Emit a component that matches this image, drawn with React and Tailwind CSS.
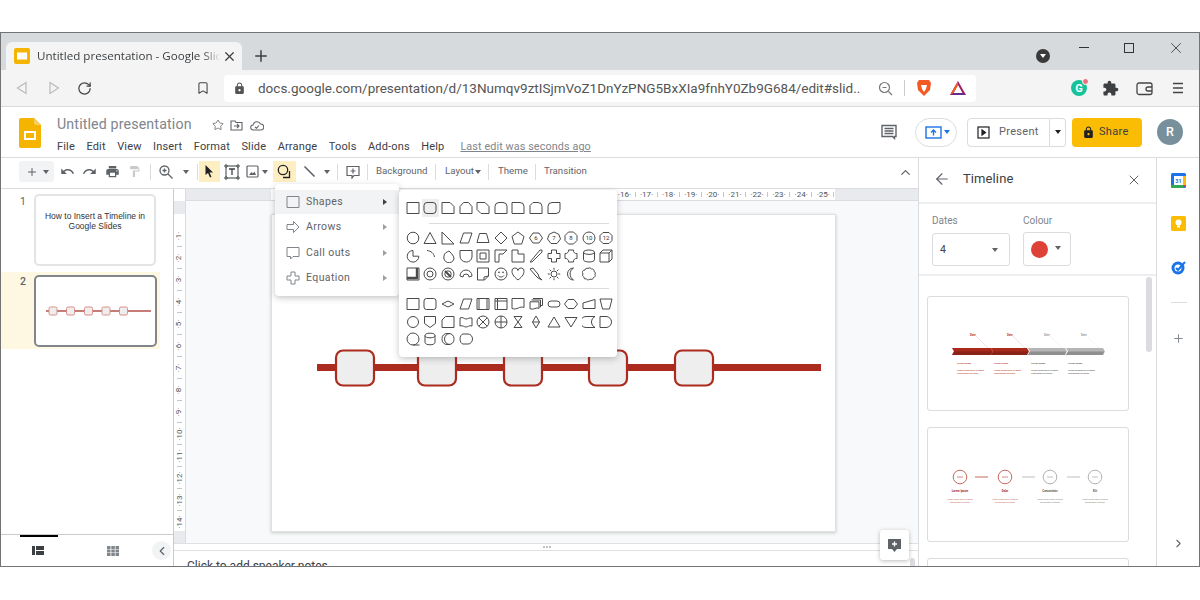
// App.jsx
import React from 'react';
import { ArrowLeft, Bookmark, ChevronLeft, ChevronRight, ChevronUp, Plus, RotateCw, Star, X } from 'lucide-react';

const Mat = ({ d, size = 16, color = '#5f6368', className = '' }) => (
    <svg width={size} height={size} viewBox="0 0 24 24" fill={color} className={className}>
        <path d={d} />
    </svg>
);

const UNDO = 'M12.5 8c-2.65 0-5.05.99-6.9 2.6L2 7v9h9l-3.62-3.62c1.39-1.16 3.16-1.88 5.12-1.88 3.54 0 6.55 2.31 7.6 5.5l2.37-.78C21.08 11.03 17.15 8 12.5 8z';
const REDO = 'M18.4 10.6C16.55 8.99 14.15 8 11.5 8c-4.65 0-8.58 3.03-9.96 7.22L3.9 16c1.05-3.19 4.05-5.5 7.6-5.5 1.95 0 3.73.72 5.12 1.88L13 16h9V7l-3.6 3.6z';
const PRINT = 'M19 8H5c-1.66 0-3 1.34-3 3v6h4v4h12v-4h4v-6c0-1.66-1.34-3-3-3zm-3 11H8v-5h8v5zm3-7c-.55 0-1-.45-1-1s.45-1 1-1 1 .45 1 1-.45 1-1 1zm-1-9H6v4h12V3z';
const PAINT = 'M18 4V3c0-.55-.45-1-1-1H5c-.55 0-1 .45-1 1v4c0 .55.45 1 1 1h12c.55 0 1-.45 1-1V6h1v4H9v11c0 .55.45 1 1 1h2c.55 0 1-.45 1-1v-9h8V4h-3z';
const PUZZLE = 'M20.5 11H19V7c0-1.1-.9-2-2-2h-4V3.5C13 2.12 11.88 1 10.5 1S8 2.12 8 3.5V5H4c-1.1 0-1.99.9-1.99 2v3.8H3.5c1.49 0 2.7 1.21 2.7 2.7s-1.21 2.7-2.7 2.7H2V20c0 1.1.9 2 2 2h3.8v-1.5c0-1.49 1.21-2.7 2.7-2.7 1.49 0 2.7 1.21 2.7 2.7V22H17c1.1 0 2-.9 2-2v-4h1.5c1.38 0 2.5-1.12 2.5-2.5S21.88 11 20.5 11z';
const LOCK = 'M18 8h-1V6c0-2.76-2.24-5-5-5S7 3.24 7 6v2H6c-1.1 0-2 .9-2 2v10c0 1.1.9 2 2 2h12c1.1 0 2-.9 2-2V10c0-1.1-.9-2-2-2zm-6 9c-1.1 0-2-.9-2-2s.9-2 2-2 2 .9 2 2-.9 2-2 2zm3.1-9H8.9V6c0-1.71 1.39-3.1 3.1-3.1 1.71 0 3.1 1.39 3.1 3.1v2z';

const Caret = ({ className = '', color = 'border-t-[#5f6368]' }) => (
    <span className={`inline-block w-0 h-0 border-x-[3.5px] border-x-transparent border-t-[4px] ${color} ${className}`} />
);

const Sep = ({ className = '' }) => <span className={`w-px h-[16px] bg-[#dadce0] shrink-0 ${className}`} />;

// single shape in the insert menu
const Sh = ({ children, hover }) => (
    <span className={`w-[17.6px] h-[17.6px] flex items-center justify-center ${hover ? 'bg-[#eeeeee]' : ''}`}>
        <svg width="14" height="14" viewBox="0 0 14 14" fill="none" stroke="#4a4a4a" strokeWidth="1" strokeLinejoin="round">
            {children}
        </svg>
    </span>
);

const Num = ({ n }) => (
    <text x="7" y="9.2" fontSize="6" fontFamily="Roboto, sans-serif" fill="#333" stroke="none" textAnchor="middle">{n}</text>
);

const RowOne = [
    <path d="M1 1.5h12v11H1z" />,
    <rect x="1" y="1.5" width="12" height="11" rx="3" />,
    <path d="M1 1.5h8l4 4v7H1z" />,
    <path d="M4.5 1.5h5l3.5 4v7H1v-7z" />,
    <path d="M1 1.5h8l4 4v7H5l-4-4z" />,
    <path d="M5 1.5h4a4 4 0 0 1 4 4v7H1v-7a4 4 0 0 1 4-4z" />,
    <path d="M1 1.5h8a4 4 0 0 1 4 4v7H1z" />,
    <path d="M4 1.5h5a4 4 0 0 1 4 4v7H1v-8z" />,
    <path d="M5 1.5h8v7a4 4 0 0 1-4 4H1v-7a4 4 0 0 1 4-4z" />,
];

const RowTwo = [
    <circle cx="7" cy="7" r="5.8" />,
    <path d="M7 1.5l6 11H1z" />,
    <path d="M1 1l12 12H1z" />,
    <path d="M4.5 2H13l-3.5 10H1z" />,
    <path d="M3.5 2.5h7l2.5 9H1z" />,
    <path d="M7 1l6 6-6 6-6-6z" />,
    <path d="M7 1l6 4.5-2.3 7.5H3.3L1 5.5z" />,
    <><path d="M4 2h6l3.5 5-3.5 5H4L.5 7z" /><Num n="6" /></>,
    <><path d="M7 1l4.8 2.3L13.5 8 10 12.5H4L.5 8l1.7-4.7z" /><Num n="7" /></>,
    <><path d="M4.5 1h5l3.5 3.5v5L9.5 13h-5L1 9.5v-5z" /><Num n="8" /></>,
    <><circle cx="7" cy="7" r="6" /><Num n="10" /></>,
    <><path d="M4 1.5h6l3 3v5l-3 3H4l-3-3v-5z" /><Num n="12" /></>,
];

const RowThree = [
    <path d="M7 1.5A5.8 5.8 0 1 0 12.8 7.2H7z" />,
    <path d="M4 1.5c4 .4 7 3 7.5 6.5" />,
    <path d="M3 7a5 5 0 1 0 10 3c0-3-2-5-5-8-2 1-5 2-5 5z" />,
    <path d="M1 1.5h12V8a5.5 5.5 0 0 1-5.5 5H7a6 6 0 0 1-6-6z" />,
    <><path d="M1 1h12v12H1z" /><path d="M4 4h6v6H4z" /></>,
    <path d="M1 1h12L9 5H5v8l-4 0z" />,
    <path d="M1 1h6v4h6v8H1z" />,
    <path d="M1 13L11 1h2v2L3 13z" />,
    <path d="M4.5 1h5v3.5H13v5H9.5V13h-5V9.5H1v-5h3.5z" />,
    <path d="M4.5 1a2 2 0 0 0 0 0h5a3 3 0 0 0 3.5 3.5v5A3 3 0 0 0 9.5 13h-5A3 3 0 0 0 1 9.5v-5A3 3 0 0 0 4.5 1z" />,
    <><ellipse cx="7" cy="3.2" rx="5.5" ry="2.2" /><path d="M1.5 3.2v7.6c0 1.2 2.5 2.2 5.5 2.2s5.5-1 5.5-2.2V3.2" /></>,
    <><path d="M1 4l3-3h9v9l-3 3H1z" /><path d="M1 4h9v9M10 4l3-3" /></>,
];

const RowFour = [
    <><path d="M1 1h12v12H1z" /><path d="M1 11h10V1" strokeWidth="2.4" /></>,
    <><circle cx="7" cy="7" r="6" /><circle cx="7" cy="7" r="3" /></>,
    <><circle cx="7" cy="7" r="6" /><circle cx="7" cy="7" r="3.2" /><path d="M4 4l6 6" strokeWidth="2" /></>,
    <path d="M1 9a6 6 0 0 1 12 0l-3 1a3 3 0 0 0-6 0z" />,
    <path d="M1.5 1h11v8l-4 4h-7zM12.5 9l-4.5 1v3" />,
    <><circle cx="7" cy="7" r="6" /><path d="M4 8.5c1.5 2 4.5 2 6 0" /><circle cx="5" cy="5.3" r=".5" /><circle cx="9" cy="5.3" r=".5" /></>,
    <path d="M7 13C2 9 1 6.5 1 4.5A3 3 0 0 1 7 3.5 3 3 0 0 1 13 4.5C13 6.5 12 9 7 13z" />,
    <path d="M1 2l3-1 4 5 1 1 1 3 3 3-4-2-3-3z" />,
    <><circle cx="7" cy="7" r="3" /><path d="M7 .8v2M7 11.2v2M.8 7h2M11.2 7h2M2.6 2.6L4 4M10 10l1.4 1.4M2.6 11.4L4 10M10 4l1.4-1.4" /></>,
    <path d="M9.5 1a6 6 0 0 0 0 12A7 7 0 0 1 9.5 1z" />,
    <path d="M3 3a2 2 0 0 1 3-1.5A2.3 2.3 0 0 1 9.5 2 2 2 0 0 1 12 4.5a2 2 0 0 1 1 3 2 2 0 0 1-1.5 3A2.2 2.2 0 0 1 8 12a2.2 2.2 0 0 1-3.5 0A2.2 2.2 0 0 1 1.8 10 2 2 0 0 1 1 7a2.4 2.4 0 0 1 2-4z" />,
];

const RowFive = [
    <path d="M1 1.5h12v11H1z" />,
    <rect x="1" y="1.5" width="12" height="11" rx="2.5" />,
    <path d="M7 4l6 3-6 3-6-3z" />,
    <path d="M4.5 2H13l-3.5 10H1z" />,
    <path d="M1 1.5h12v11H1zM3 1.5v11M11 1.5v11" />,
    <path d="M1 1.5h12v11H1zM3.5 1.5v11M1 4h12" />,
    <path d="M1 1.5h12v9c-4-2-7 3-12 1z" />,
    <path d="M4 1.5h9.500v7h-2M2.500 3h9v7h-1M1 4.800h9v6.500c-3-1.500-5 2-9 .5z" />,
    <rect x="1" y="4" width="12" height="6" rx="3" />,
    <path d="M4 2.500h6l3.500 4.500-3.500 4.500H4L.5 7z" />,
    <path d="M1 6l12-3.500v9H1z" />,
    <path d="M1 2h12l-2.500 10h-7z" />,
];

const RowSix = [
    <circle cx="7" cy="7" r="5.500" />,
    <path d="M1.500 1.500h11v7L7 12.500 1.500 8.500z" />,
    <path d="M4.500 1.500H13v11H1V5z" />,
    <path d="M1 3c3-1.500 4 1 6 1s3-1.500 6-1v8c-3-1-4 1-6 1s-3-2-6-1z" />,
    <><circle cx="7" cy="7" r="6" /><path d="M2.800 2.800l8.400 8.400M11.200 2.800l-8.400 8.400" /></>,
    <><circle cx="7" cy="7" r="6" /><path d="M1 7h12M7 1v12" /></>,
    <path d="M3 1.500h8L3 12.500h8z" />,
    <><path d="M7 1l3.500 6L7 13 3.500 7z" /><path d="M3.500 7h7" /></>,
    <path d="M7 2l6 10H1z" />,
    <path d="M1 2.500h12L7 12z" />,
    <path d="M4 1.500h9a6 6 0 0 0 0 11H4a5.500 5.500 0 0 1 0-11z" />,
    <path d="M1 1.500h6a5.500 5.500 0 0 1 0 11H1z" />,
];

const RowSeven = [
    <><circle cx="7" cy="7" r="6" /><path d="M7 13h6.500" /></>,
    <><ellipse cx="7" cy="3.500" rx="5" ry="2.300" /><path d="M2 3.500v7c0 1.300 2.200 2.300 5 2.300s5-1 5-2.300v-7" /></>,
    <><rect x="1" y="1.500" width="12" height="11" rx="5" /><path d="M9 1.500a5.500 5.500 0 0 0 0 11" /></>,
    <path d="M4 2h5a4.500 5 0 0 1 0 10H4c-1.500 0-3-2.500-3-5s1.500-5 3-5z" />,
];

const ShapeRow = ({ items, hoverAt = -1 }) => (
    <div className="flex h-[17.6px]">
        {items.map((s, i) => <Sh key={i} hover={i === hoverAt}>{s}</Sh>)}
    </div>
);

const TimelineArrowCard = () => (
    <svg width="200" height="113" viewBox="0 0 200 113">
        {[
            [42, '#c0392b'], [79, '#c0392b'], [116, '#9e9e9e'], [153, '#9e9e9e'],
        ].map(([x, c], i) => (
            <g key={i}>
                <text x={x} y="39" fontSize="2.800" fontWeight="700" fontFamily="Roboto, sans-serif" fill={c}>Date</text>
                <path d={`M${x + 6} 39L${x + 18} 51`} stroke={i < 2 ? '#eecdc9' : '#eeeeee'} strokeWidth=".6" />
                <text x={x - 13} y="67" fontSize="2.400" fontWeight="700" fontFamily="Roboto, sans-serif" fill={c === '#9e9e9e' ? '#555' : c}>Lorem Ipsum</text>
                <text x={x - 13} y="74" fontSize="2.200" fontWeight="500" fontFamily="Roboto, sans-serif" fill={c === '#9e9e9e' ? '#555' : c}>Lorem ipsum dolor sit amet</text>
                <text x={x - 13} y="77" fontSize="2.200" fontWeight="500" fontFamily="Roboto, sans-serif" fill={c === '#9e9e9e' ? '#555' : c}>consectetur elit tortor</text>
            </g>
        ))}
        <path d="M24 51h39l2 3.500-2 3.500H24l2-3.500z" fill="#a9291d" />
        <path d="M26 54.500h38l-1 3.500H24z" fill="#7f1f16" opacity=".7" />
        <path d="M63 51h36l2 3.500-2 3.500H63l2-3.500z" fill="#a9291d" />
        <path d="M65 54.500h35l-1 3.500H63z" fill="#7f1f16" opacity=".7" />
        <path d="M100 51h37l2 3.500-2 3.500h-37l2-3.500z" fill="#b5b5b5" />
        <path d="M102 54.500h36l-1 3.500h-37z" fill="#8f8f8f" />
        <path d="M138 51h37l2 3.500-2 3.500h-37l2-3.500z" fill="#b5b5b5" />
        <path d="M140 54.500h36l-1 3.500h-37z" fill="#8f8f8f" />
    </svg>
);

const TimelineCircleCard = () => (
    <svg width="200" height="113" viewBox="0 0 200 113">
        {[
            [32, '#c0564b', 'Lorem Ipsum'], [77, '#c0564b', 'Dolor'], [122, '#a8a8a8', 'Consectetur'], [167, '#a8a8a8', 'Elit'],
        ].map(([x, c, t], i) => (
            <g key={i}>
                <circle cx={x} cy="49" r="6.800" fill="none" stroke={c} strokeWidth=".9" />
                <path d={`M${x - 3} 49h6`} stroke={c} strokeWidth=".7" />
                <text x={x} y="64" fontSize="2.800" fontWeight="700" fontFamily="Roboto, sans-serif" textAnchor="middle" fill={i < 2 ? '#a9291d' : '#555'}>{t}</text>
                <text x={x} y="72" fontSize="2.100" fontFamily="Roboto, sans-serif" textAnchor="middle" fill={i < 2 ? '#c0564b' : '#777'}>Lorem ipsum dolor sit amet</text>
                <text x={x} y="75" fontSize="2.100" fontFamily="Roboto, sans-serif" textAnchor="middle" fill={i < 2 ? '#c0564b' : '#777'}>consectetur elit tortor</text>
            </g>
        ))}
        <path d="M47 49h13" stroke="#c0564b" strokeWidth=".9" />
        <path d="M94 49h13M139 49h13" stroke="#b5b5b5" strokeWidth=".9" />
    </svg>
);

const MiniTimeline = () => (
    <svg width="118" height="68" viewBox="0 0 118 68">
        <path d="M10 34h105" stroke="#b5524a" strokeWidth="1.300" />
        {[13, 30.500, 48.500, 66, 83.500].map((x) => (
            <rect key={x} x={x} y="30" width="8" height="8" rx="1.500" fill="#eeeeee" stroke="#d98f88" strokeWidth="1" />
        ))}
    </svg>
);

const App = () => {
    const hNums = [];
    for (let i = 1; i <= 25; i++) hNums.push(i);
    const vNums = [];
    for (let i = 1; i <= 14; i++) vNums.push(i);

    return (
        <div className="w-[1200px] h-[600px] bg-white relative overflow-hidden pt-[32px] font-['Roboto',sans-serif] text-[#3c4043]">
            <div className="h-[535px] border border-[#737373] flex flex-col overflow-hidden bg-white">

                {/* tab strip */}
                <div className="h-[37px] shrink-0 bg-[#d7dadd] flex items-end pl-[5px] relative">
                    <div className="w-[236px] h-[28px] bg-[#f4f4f5] rounded-t-[6px] flex items-center pl-[8px]">
                        <svg width="16" height="16" viewBox="0 0 16 16">
                            <rect width="16" height="16" rx="2" fill="#f4b400" />
                            <rect x="3" y="4.500" width="10" height="7" fill="#fff" />
                        </svg>
                        <span className="ml-[7px] w-[184px] text-[11.6px] whitespace-nowrap overflow-hidden font-['Open_Sans',sans-serif] text-[#3c4043] [mask-image:linear-gradient(to_right,black_90%,transparent)]">Untitled presentation - Google Slides</span>
                        <X size={15} strokeWidth={2} color="#3c4043" className="ml-[1px]" />
                    </div>
                    <Plus size={18} strokeWidth={2} color="#3c4043" className="ml-[10px] mb-[5px]" />
                    <div className="ml-auto flex items-center h-full relative">
                        <span className="w-[14px] h-[14px] rounded-full bg-[#3a3a3a] flex items-center justify-center mr-[29px] mt-[9px]">
                            <Caret color="border-t-[#ffffff]" />
                        </span>
                        <span className="w-[10px] h-px bg-[#333] mr-[35px] mb-[8px]" />
                        <span className="w-[10px] h-[10px] border border-[#333] mr-[33px] mb-[8px]" />
                        <X size={18} strokeWidth={1.100} color="#333" className="mr-[14px] mb-[8px]" />
                    </div>
                </div>

                {/* address bar */}
                <div className="h-[37px] shrink-0 bg-[#f4f4f5] border-b border-[#d8dadc] flex items-center">
                    <svg width="14" height="14" viewBox="0 0 14 14" className="ml-[14px]" fill="none" stroke="#b8babc" strokeWidth="1.200"><path d="M11 1.500L2.500 7l8.500 5.500z" /></svg>
                    <svg width="14" height="14" viewBox="0 0 14 14" className="ml-[18px]" fill="none" stroke="#b8babc" strokeWidth="1.200"><path d="M3 1.500L11.500 7 3 12.500z" /></svg>
                    <RotateCw size={15} strokeWidth={2} color="#444" className="ml-[16px]" />
                    <Bookmark size={14} strokeWidth={1.800} color="#444" className="ml-[104px]" />
                    <div className="ml-[14px] w-[752px] h-[27px] rounded-[4px] bg-white flex items-center pl-[9px]">
                        <Mat d={LOCK} size={13} color="#555" />
                        <span className="ml-[12px] mt-[1px] w-[603px] text-[13.5px] text-[#555] whitespace-nowrap overflow-hidden">docs.google.com/presentation/d/13Numqv9ztISjmVoZ1DnYzPNG5BxXIa9fnhY0Zb9G684/edit#slid...</span>
                        <svg width="15" height="15" viewBox="0 0 15 15" fill="none" stroke="#777" strokeWidth="1.200" className="ml-[17px]">
                            <circle cx="6.500" cy="6.500" r="5" /><path d="M10.500 10.500L14 14M4.500 6.500h4" />
                        </svg>
                        <span className="w-px h-[16px] bg-[#ccc] ml-[11px]" />
                        <svg width="16" height="18" viewBox="0 0 16 18" className="ml-[11px]">
                            <path d="M3 1h10l2 3-1 7-6 6-6-6-1-7z" fill="#f15a24" />
                            <path d="M5 6h6l-1 4-2 3-2-3z" fill="#fff" />
                        </svg>
                        <svg width="18" height="16" viewBox="0 0 18 16" className="ml-[17px]">
                            <path d="M9 1l8 14H1z" fill="#9e1f63" />
                            <path d="M9 5l4.500 8h-9z" fill="#fff" />
                            <path d="M1 15l3.500-2H13.500L17 15z" fill="#662d91" />
                            <path d="M1 15L9 1v4L4.500 13z" fill="#f15a24" />
                        </svg>
                    </div>
                    <span className="ml-[95px] relative w-[16px] h-[16px] rounded-full bg-[#15c39a] flex items-center justify-center text-[11px] font-bold text-white leading-none">G
                        <span className="absolute -top-[2px] -right-[2px] w-[7px] h-[7px] rounded-full bg-[#f0727e] border border-white" />
                    </span>
                    <Mat d={PUZZLE} size={17} color="#3c4043" className="ml-[15px]" />
                    <svg width="17" height="15" viewBox="0 0 17 15" fill="none" stroke="#444" strokeWidth="1.300" className="ml-[17px]">
                        <rect x="1" y="2" width="15" height="11.500" rx="2" /><path d="M16 6h-4a2 2 0 0 0 0 4h4" />
                    </svg>
                    <svg width="12" height="12" viewBox="0 0 12 12" stroke="#444" strokeWidth="1.300" className="ml-[19px]"><path d="M1 1.500h10M1 6h10M1 10.500h10" /></svg>
                </div>

                {/* docs header */}
                <div className="h-[51px] shrink-0 border-b border-[#dadce0] flex relative">
                    <svg width="22" height="30" viewBox="0 0 22 30" className="ml-[18px] mt-[11px]">
                        <path d="M2 0h13l7 7v21a2 2 0 0 1-2 2H2a2 2 0 0 1-2-2V2a2 2 0 0 1 2-2z" fill="#f4b400" />
                        <path d="M15 0l7 7h-5a2 2 0 0 1-2-2z" fill="#f7cd5b" />
                        <path d="M5 13h12v9H5z" fill="#fff" /><path d="M7 15h8v5H7z" fill="#f4b400" />
                    </svg>
                    <div className="ml-[16px] flex flex-col">
                        <div className="flex items-center h-[28px] mt-[4px]">
                            <span className="text-[14.2px] text-[#80868b] tracking-[0.15px] w-[155px] whitespace-nowrap">Untitled presentation</span>
                            <Star size={12} strokeWidth={1.600} color="#5f6368" />
                            <svg width="13" height="12" viewBox="0 0 13 12" fill="none" stroke="#5f6368" strokeWidth="1.100" className="ml-[6px]">
                                <path d="M1 2h4l1 1.500h6V11H1zM4 7h5M7 5l2 2-2 2" />
                            </svg>
                            <svg width="14" height="11" viewBox="0 0 14 11" fill="none" stroke="#5f6368" strokeWidth="1.100" className="ml-[7px]">
                                <path d="M3.500 10a2.500 2.500 0 0 1-.5-5A4 4 0 0 1 10.500 4 3 3 0 0 1 11 10zM5 7l1.500 1.200L9 5.500" />
                            </svg>
                        </div>
                        <div className="flex items-center text-[11px] tracking-[0.16px] text-[#3c4043] h-[14px] mt-[1px]">
                            <span>File</span><span className="ml-[11.5px]">Edit</span><span className="ml-[11.5px]">View</span>
                            <span className="ml-[11.5px]">Insert</span><span className="ml-[11.5px]">Format</span><span className="ml-[11.5px]">Slide</span>
                            <span className="ml-[11.5px]">Arrange</span><span className="ml-[11.5px]">Tools</span><span className="ml-[11.5px]">Add-ons</span>
                            <span className="ml-[11.5px]">Help</span>
                            <span className="ml-[16px] text-[#80868b] underline text-[10.8px] tracking-[0.1px]">Last edit was seconds ago</span>
                        </div>
                    </div>
                    <div className="ml-auto flex items-center">
                        <svg width="16" height="16" viewBox="0 0 16 16" fill="none" stroke="#5f6368" strokeWidth="1.400"><path d="M1 1.500h14v11h-1.500v2l-2-2H1zM3.500 4.500h9M3.500 7h9M3.500 9.500h9" /></svg>
                        <div className="ml-[18px] w-[42px] h-[29px] rounded-full border border-[#dadce0] flex items-center pl-[9px]">
                            <svg width="17" height="13" viewBox="0 0 17 13" fill="none" stroke="#1a73e8" strokeWidth="1.400">
                                <rect x="1" y="1" width="15" height="11" /><path d="M8.500 9.500V4.500M6 6.500l2.500-2.500L11 6.500" />
                            </svg>
                            <Caret color="border-t-[#1a73e8]" className="ml-[2px]" />
                        </div>
                        <div className="ml-[10px] w-[83px] h-[29px] border border-[#dadce0] rounded-l-[4px] flex items-center pl-[9px]">
                            <svg width="13" height="13" viewBox="0 0 13 13" fill="none" stroke="#202124" strokeWidth="1.200"><rect x="1" y="1" width="11" height="11" /><path d="M5 4v5l3.500-2.500z" fill="#202124" /></svg>
                            <span className="ml-[9px] text-[11px] tracking-[0.3px] text-[#5f6368]">Present</span>
                        </div>
                        <div className="w-[16px] h-[29px] border border-l-0 border-[#dadce0] rounded-r-[4px] flex items-center justify-center"><Caret color="border-t-[#202124]" /></div>
                        <div className="ml-[6px] w-[70px] h-[29px] rounded-[4px] bg-[#fbbc04] flex items-center pl-[10px]">
                            <Mat d={LOCK} size={13} color="#202124" />
                            <span className="ml-[4px] text-[11px] tracking-[0.3px] text-[#3c4043]">Share</span>
                        </div>
                        <span className="ml-[15px] mr-[16px] w-[26px] h-[26px] rounded-full bg-[#78909c] text-white text-[12.500px] font-medium flex items-center justify-center">R</span>
                    </div>
                </div>

                {/* body */}
                <div className="flex-1 flex min-h-0">
                    <div className="w-[917px] shrink-0 flex flex-col min-w-0">

                        {/* toolbar */}
                        <div className="h-[31px] shrink-0 border-b border-[#dadce0] flex items-center pl-[18px] pb-[3px] relative">
                            <div className="w-[35px] h-[21px] bg-[#f1f3f4] rounded-[3px] flex items-center pl-[7px]">
                                <Plus size={12} strokeWidth={2} color="#5f6368" /><Caret className="ml-[5px]" />
                            </div>
                            <Mat d={UNDO} size={15} className="ml-[6px]" />
                            <Mat d={REDO} size={15} className="ml-[7px]" />
                            <Mat d={PRINT} size={15} className="ml-[8px]" />
                            <Mat d={PAINT} size={13} color="#c7c9cc" className="ml-[8px]" />
                            <Sep className="ml-[9px]" />
                            <svg width="14" height="14" viewBox="0 0 14 14" fill="none" stroke="#5f6368" strokeWidth="1.300" className="ml-[8px]">
                                <circle cx="5.500" cy="5.500" r="4.500" /><path d="M9 9l4.500 4.500M3.500 5.500h4M5.500 3.500v4" />
                            </svg>
                            <Caret className="ml-[10px]" />
                            <Sep className="ml-[8px]" />
                            <div className="ml-[1px] w-[21px] h-[21px] bg-[#feefc3] flex items-center justify-center">
                                <svg width="9" height="13" viewBox="0 0 9 13" fill="#202124"><path d="M.5 0v10l2.500-2 2 4.500 1.500-.7-2-4.300h3.500z" /></svg>
                            </div>
                            <svg width="16" height="16" viewBox="0 0 16 16" fill="none" stroke="#3c4043" strokeWidth="1" className="ml-[4px]">
                                <rect x="2" y="2" width="12" height="12" /><path d="M5 5h6M8 5v6" strokeWidth="1.300" />
                                <path d="M1 1h2v2H1zM13 1h2v2h-2zM1 13h2v2H1zM13 13h2v2h-2z" fill="#fff" />
                            </svg>
                            <svg width="13" height="13" viewBox="0 0 13 13" fill="none" stroke="#5f6368" strokeWidth="1.200" className="ml-[6px]">
                                <rect x="1" y="1" width="11" height="11" rx="1" /><path d="M3 10l2.500-3 1.500 1.500L8.500 6.500 10 10z" fill="#5f6368" stroke="none" />
                            </svg>
                            <Caret className="ml-[3px]" />
                            <div className="ml-[5px] w-[23px] h-[21px] bg-[#feefc3] flex items-center justify-center">
                                <svg width="15" height="15" viewBox="0 0 15 15" fill="none" stroke="#202124" strokeWidth="1.300">
                                    <circle cx="6" cy="6" r="4.700" /><path d="M12.500 7v6.500H6" />
                                </svg>
                            </div>
                            <svg width="13" height="13" viewBox="0 0 13 13" stroke="#5f6368" strokeWidth="1.600" className="ml-[7px]"><path d="M1.500 1.500l10 10" /></svg>
                            <Caret className="ml-[8px]" />
                            <Sep className="ml-[7px]" />
                            <svg width="14" height="14" viewBox="0 0 14 14" fill="none" stroke="#5f6368" strokeWidth="1.200" className="ml-[8px]">
                                <path d="M1 1.500h12v9H8L6 13v-2.500H1zM7 3.500v5M4.500 6h5" />
                            </svg>
                            <Sep className="ml-[7px]" />
                            <span className="ml-[8px] text-[9.7px] text-[#5f6368] w-[51px] whitespace-nowrap">Background</span>
                            <Sep className="ml-[8px]" />
                            <span className="ml-[9px] text-[9.7px] text-[#5f6368] w-[29px]">Layout</span>
                            <Caret className="ml-[1px]" />
                            <Sep className="ml-[7px]" />
                            <span className="ml-[9px] text-[9.7px] text-[#5f6368] w-[30px]">Theme</span>
                            <Sep className="ml-[7px]" />
                            <span className="ml-[8px] text-[9.7px] text-[#5f6368]">Transition</span>
                            <ChevronUp size={15} strokeWidth={2} color="#5f6368" className="absolute left-[897px] top-[7px]" />
                        </div>

                        <div className="flex-1 flex min-h-0">
                            {/* filmstrip */}
                            <div className="w-[173px] shrink-0 border-r border-[#c8cacc] flex flex-col">
                                <div className="flex-1 pr-[13px]">
                                    <div className="flex pt-[5px] h-[83px]">
                                        <span className="w-[20px] pl-[19px] text-[10.500px] text-[#5f6368] leading-[12px] mt-[2px]">1</span>
                                        <div className="ml-[13px] w-[122px] h-[72px] border-2 border-[#e3e4e6] rounded-[5px] flex flex-col items-center pt-[15px] text-[8.500px] leading-[10px] text-[#333] font-['Liberation_Sans',sans-serif]">
                                            <span>How to Insert a Timeline in</span>
                                            <span>Google Slides</span>
                                        </div>
                                    </div>
                                    <div className="flex h-[77px] items-center bg-[#fef8e3]">
                                        <span className="w-[20px] pl-[19px] self-start text-[10.500px] font-medium text-[#5f6368] leading-[12px] mt-[4px]">2</span>
                                        <div className="ml-[13px] w-[123px] h-[72px] border-2 border-[#80868b] rounded-[5px] bg-white overflow-hidden"><MiniTimeline /></div>
                                    </div>
                                </div>
                                <div className="h-[32px] shrink-0 border-t border-[#c8cacc] relative flex items-center">
                                    <span className="absolute left-[19px] top-0 w-[38px] h-[2px] bg-black" />
                                    <svg width="12" height="9" viewBox="0 0 12 9" fill="#3c4043" className="ml-[31px]"><path d="M0 0h3v9H0zM4 0h8v4H4zM4 5h8v4H4z" /></svg>
                                    <svg width="12" height="10" viewBox="0 0 12 10" fill="#80868b" className="ml-[63px]"><path d="M0 0h3.500v3H0zM4.300 0h3.500v3H4.300zM8.500 0H12v3H8.500zM0 3.500h3.500v3H0zM4.300 3.500h3.500v3H4.300zM8.500 3.500H12v3H8.500zM0 7h3.500v3H0zM4.300 7h3.500v3H4.300zM8.500 7H12v3H8.500z" /></svg>
                                    <span className="ml-[33px] w-[19px] h-[19px] rounded-full bg-[#f1f3f4] flex items-center justify-center"><ChevronLeft size={14} strokeWidth={2} color="#5f6368" /></span>
                                </div>
                            </div>

                            {/* editor */}
                            <div className="flex-1 flex flex-col min-w-0">
                                <div className="flex-1 flex min-h-0">
                                    {/* vertical ruler */}
                                    <div className="w-[12px] shrink-0 border-r border-[#dadce0] flex flex-col bg-[#e8eaed]">
                                        <div className="h-[12px] shrink-0 bg-white" />
                                        <div className="h-[13px] shrink-0" />
                                        <div className="h-[317px] shrink-0 bg-white flex flex-col pt-[11px] overflow-hidden">
                                            {vNums.map((n) => (
                                                <div key={n} className="h-[22px] shrink-0 relative flex items-center justify-center">
                                                    <span className="text-[8px] leading-[10px] text-[#555] -rotate-90 whitespace-nowrap">·{n}·</span>
                                                    <span className="absolute left-[3px] bottom-0 w-[5px] h-px bg-[#c4c7c9]" />
                                                </div>
                                            ))}
                                        </div>
                                    </div>
                                    <div className="flex-1 flex flex-col min-w-0 bg-[#f8f9fa]">
                                        {/* horizontal ruler */}
                                        <div className="h-[12px] shrink-0 flex bg-[#e8eaed] border-b border-[#dadce0]">
                                            <div className="w-[85px] shrink-0" />
                                            <div className="w-[564px] shrink-0 bg-white flex pl-[11px]">
                                                {hNums.map((n) => (
                                                    <span key={n} className="w-[22.100px] shrink-0 relative text-center text-[8px] leading-[11px] text-[#555]">
                                                        ·{n}·
                                                        <span className="absolute right-0 top-[3px] w-px h-[5px] bg-[#c4c7c9]" />
                                                    </span>
                                                ))}
                                            </div>
                                        </div>
                                        <div className="flex-1 pl-[85px] pt-[13px] relative">
                                            <div className="w-[565px] h-[318px] bg-white border border-[#e0e0e0] shadow-[0_1px_3px_rgba(60,64,67,0.25)]">
                                                <svg width="563" height="316" viewBox="0 0 563 316">
                                                    <path d="M45 152.500h504" stroke="#ab2c1f" strokeWidth="7" />
                                                    {[63, 145, 231, 316, 402].map((x) => (
                                                        <rect key={x} x={x + 1} y="135.500" width="38" height="35" rx="7" fill="#eeeeee" stroke="#ab2c1f" strokeWidth="2.200" />
                                                    ))}
                                                </svg>
                                            </div>
                                            <div className="absolute left-[694px] top-[329px] w-[29px] h-[30px] bg-white rounded-[3px] shadow-[0_1px_4px_rgba(60,64,67,0.35)] flex items-center justify-center">
                                                <svg width="15" height="15" viewBox="0 0 15 15" fill="#5f6368"><path d="M1 1h13v10h-4l-2.500 3L5 11H1z" /><path d="M7.500 3.500v5M5 6h5" stroke="#fff" strokeWidth="1.300" /></svg>
                                            </div>
                                        </div>
                                    </div>
                                </div>
                                {/* notes */}
                                <div className="h-[8px] shrink-0 border-y border-[#e0e0e0] bg-white flex items-center justify-center gap-[1px] pl-[2px]">
                                    <span className="w-[2px] h-[2px] bg-[#bdc1c6]" /><span className="w-[2px] h-[2px] bg-[#bdc1c6]" /><span className="w-[2px] h-[2px] bg-[#bdc1c6]" />
                                </div>
                                <div className="h-[15px] shrink-0 overflow-hidden pl-[13px] pt-[8px] text-[12px] leading-[14px] text-[#3c4043] flex">
                                    <span className="whitespace-nowrap">Click to add speaker notes</span>
                                    <span className="ml-auto mr-[3px] -mt-[1px] w-[5px] h-[10px] rounded-full bg-[#dadce0]" />
                                </div>
                            </div>
                        </div>
                    </div>

                    {/* side panel */}
                    <div className="w-[238px] shrink-0 border-l border-[#dadce0] flex flex-col relative">
                        <div className="h-[46px] shrink-0 border-b-2 border-[#eceef0] flex items-center pl-[14px] pb-[3px]">
                            <ArrowLeft size={18} strokeWidth={1.500} color="#5f6368" />
                            <span className="ml-[12px] text-[13px] tracking-[0.1px] text-[#3c4043]">Timeline</span>
                            <X size={16} strokeWidth={1.500} color="#5f6368" className="ml-auto mr-[14px] mt-[2px]" />
                        </div>
                        <div className="h-[72px] shrink-0 border-b-2 border-[#eceef0] flex pl-[13px] pt-[10px]">
                            <div className="flex flex-col">
                                <span className="text-[10px] leading-[14px] text-[#80868b]">Dates</span>
                                <div className="mt-[5px] w-[78px] h-[33px] border border-[#dadce0] rounded-[3px] flex items-center pl-[7px]">
                                    <span className="text-[10.500px] text-[#3c4043]">4</span>
                                    <Caret className="ml-auto mr-[11px]" />
                                </div>
                            </div>
                            <div className="flex flex-col ml-[13px]">
                                <span className="text-[10px] leading-[14px] text-[#80868b]">Colour</span>
                                <div className="mt-[4px] w-[48px] h-[34px] border border-[#dadce0] rounded-[3px] flex items-center pl-[7px]">
                                    <span className="w-[17px] h-[17px] rounded-full bg-[#de4136]" />
                                    <Caret className="ml-[7px] mb-[2px]" />
                                </div>
                            </div>
                        </div>
                        <div className="flex-1 min-h-0 overflow-hidden pl-[8px] pt-[20px] flex flex-col gap-[16px] relative">
                            <div className="w-[202px] h-[115px] shrink-0 border border-[#dadce0] rounded-[3px]"><TimelineArrowCard /></div>
                            <div className="w-[202px] h-[115px] shrink-0 border border-[#dadce0] rounded-[3px]"><TimelineCircleCard /></div>
                            <div className="w-[202px] h-[115px] shrink-0 border border-[#dadce0] rounded-[3px]" />
                            <span className="absolute left-[227px] top-[1px] w-[6px] h-[75px] rounded-full bg-[#dadce0]" />
                        </div>
                    </div>

                    {/* addons strip */}
                    <div className="flex-1 border-l border-[#dadce0] flex flex-col items-center relative pl-[1px]">
                        <svg width="15" height="15" viewBox="0 0 15 15" className="mt-[15px]">
                            <rect width="15" height="15" rx="1.500" fill="#1a73e8" />
                            <rect x="3" y="3" width="9" height="9" fill="#fff" />
                            <path d="M0 12h12v3H1.500A1.500 1.500 0 0 1 0 13.500z" fill="#34a853" />
                            <path d="M12 3h3v9h-3z" fill="#fbbc04" />
                            <path d="M12 12h3l-3 3z" fill="#ea4335" />
                            <text x="7.500" y="9.500" fontSize="5.500" fontWeight="700" fontFamily="Roboto, sans-serif" fill="#1a73e8" textAnchor="middle">31</text>
                        </svg>
                        <svg width="15" height="15" viewBox="0 0 15 15" className="mt-[28px]">
                            <rect width="15" height="15" rx="1.500" fill="#fbbc04" />
                            <circle cx="7.500" cy="6.500" r="3" fill="#fff" />
                            <rect x="6" y="9.500" width="3" height="2" fill="#fff" />
                        </svg>
                        <svg width="15" height="15" viewBox="0 0 15 15" className="mt-[29px]">
                            <circle cx="7" cy="8" r="6.500" fill="#1a73e8" />
                            <circle cx="7" cy="8" r="3.500" fill="#fff" />
                            <path d="M5 8l2 2 7-8" fill="none" stroke="#1a73e8" strokeWidth="2" />
                        </svg>
                        <span className="mt-[27px] w-[16px] h-px bg-[#dadce0]" />
                        <Plus size={13} strokeWidth={1.800} color="#80868b" className="mt-[29px]" />
                        <ChevronRight size={13} strokeWidth={2} color="#5f6368" className="mt-[192px]" />
                    </div>
                </div>
            </div>

            {/* insert shape menu */}
            <div className="absolute left-[275px] top-[184px] w-[124px] h-[112px] bg-white rounded-[4px] shadow-[0_2px_6px_rgba(60,64,67,0.3)] pt-[6px] text-[10.500px] tracking-[0.4px] text-[#5f6368]">
                <div className="h-[24px] bg-[#f1f3f4] flex items-center pl-[11px]">
                    <svg width="14" height="14" viewBox="0 0 14 14" fill="none" stroke="#80868b"><path d="M1 1.500h12v11H1z" /></svg>
                    <span className="ml-[6px]">Shapes</span>
                    <span className="ml-auto mr-[12px] w-0 h-0 border-y-[3px] border-y-transparent border-l-[4px] border-l-[#3c4043]" />
                </div>
                <div className="h-[26px] flex items-center pl-[11px]">
                    <svg width="14" height="14" viewBox="0 0 14 14" fill="none" stroke="#80868b"><path d="M1 4.500h6.500V1.500L13 7l-5.500 5.500v-3H1z" /></svg>
                    <span className="ml-[6px]">Arrows</span>
                    <span className="ml-auto mr-[12px] w-0 h-0 border-y-[3px] border-y-transparent border-l-[4px] border-l-[#9aa0a6]" />
                </div>
                <div className="h-[25px] flex items-center pl-[11px]">
                    <svg width="14" height="14" viewBox="0 0 14 14" fill="none" stroke="#80868b"><path d="M1 1.500h12v9H7L4.500 13v-2.500H1z" /></svg>
                    <span className="ml-[6px]">Call outs</span>
                    <span className="ml-auto mr-[12px] w-0 h-0 border-y-[3px] border-y-transparent border-l-[4px] border-l-[#9aa0a6]" />
                </div>
                <div className="h-[25px] flex items-center pl-[11px]">
                    <svg width="14" height="14" viewBox="0 0 14 14" fill="none" stroke="#80868b"><path d="M5 1h4v4h4v4H9v4H5V9H1V5h4z" /></svg>
                    <span className="ml-[6px]">Equation</span>
                    <span className="ml-auto mr-[12px] w-0 h-0 border-y-[3px] border-y-transparent border-l-[4px] border-l-[#9aa0a6]" />
                </div>
            </div>
            <div className="absolute left-[399px] top-[190px] w-[218px] h-[167px] bg-white rounded-[4px] shadow-[0_2px_6px_rgba(60,64,67,0.3)] pl-[5px] pt-[9px]">
                <ShapeRow items={RowOne} hoverAt={1} />
                <div className="ml-[25px] mr-[8px] h-px bg-[#dadce0] mt-[6px] mb-[6px]" />
                <ShapeRow items={RowTwo} />
                <ShapeRow items={RowThree} />
                <ShapeRow items={RowFour} />
                <div className="ml-[25px] mr-[8px] h-px bg-[#dadce0] mt-[6px] mb-[6px]" />
                <ShapeRow items={RowFive} />
                <ShapeRow items={RowSix} />
                <ShapeRow items={RowSeven} />
            </div>
        </div>
    );
};

export default App;
